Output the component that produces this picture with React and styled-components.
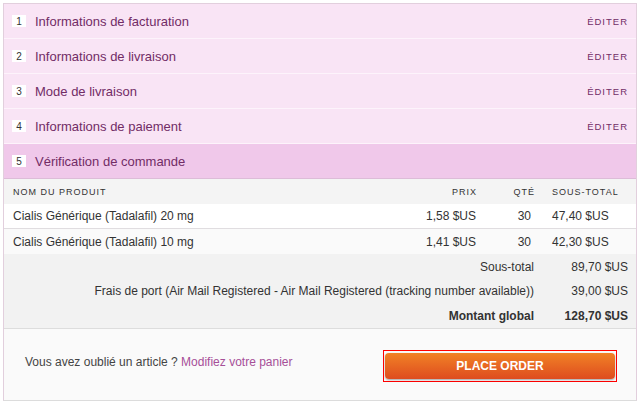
import React from 'react';
import styled, { createGlobalStyle } from 'styled-components';

const GlobalStyle = createGlobalStyle`
  body {
    margin: 0;
    background: #ffffff;
    font-family: "Liberation Sans", Arial, sans-serif;
  }
`;

const Page = styled.div`
  padding: 3px 2px 0 3px;
`;

const Panel = styled.div`
  border: 1px solid #e2cfdd;
  border-bottom-color: #dcdcdc;
  width: 632px;
`;

const Step = styled.div`
  display: flex;
  align-items: center;
  height: 34px;
  padding: 0 8px 0 8px;
  background: ${p => (p.$active ? '#f0c8ea' : '#f9e4f5')};
  border-bottom: 1px solid ${p => (p.$active ? '#ddbcd8' : '#fdf3fb')};
`;

const StepNum = styled.span`
  display: inline-flex;
  align-items: center;
  justify-content: center;
  width: 14px;
  height: 12px;
  background: #ffffff;
  color: #333333;
  font-size: 10px;
  margin-right: 9px;
`;

const StepTitle = styled.span`
  flex: 1;
  font-size: 13px;
  color: #722c66;
`;

const EditLink = styled.span`
  font-size: 9.5px;
  letter-spacing: 1px;
  color: #722c66;
`;

const Row = styled.div`
  display: grid;
  grid-template-columns: 1fr 80px 58px 76px;
  align-items: center;
  height: ${p => p.$h || 25}px;
  padding: 0 8px 0 9px;
  background: ${p => p.$bg};
  border-bottom: ${p => (p.$line ? '1px solid #e0dde0' : 'none')};
  font-size: 12px;
  color: #333333;
`;

const HeadCell = styled.span`
  font-size: 9px;
  letter-spacing: 1px;
  color: #333333;
  text-align: ${p => p.$align || 'left'};
  padding-right: ${p => p.$pr || 0}px;
`;

const Cell = styled.span`
  text-align: ${p => p.$align || 'left'};
  padding-right: ${p => p.$pr || 0}px;
`;

const Totals = styled.div`
  background: #f2f2f2;
  border-bottom: 1px solid #dddddd;
  padding: 0 8px 0 9px;
`;

const TotalLine = styled.div`
  display: grid;
  grid-template-columns: 1fr 94px;
  align-items: center;
  height: ${p => p.$h}px;
  font-size: 12px;
  color: #333333;
  font-weight: ${p => (p.$bold ? 'bold' : 'normal')};
`;

const TotalLabel = styled.span`
  text-align: right;
`;

const TotalValue = styled.span`
  text-align: right;
`;

const Footer = styled.div`
  display: flex;
  align-items: center;
  justify-content: space-between;
  height: 71px;
  padding: 0 19px 0 21px;
  background: #fafafa;
`;

const Forgot = styled.span`
  font-size: 12px;
  color: #444444;
  margin-top: -6px;
`;

const CartLink = styled.a`
  color: #a64f98;
  text-decoration: none;
`;

const Outline = styled.div`
  border: 1px solid #ff0000;
  padding: 2px 1px;
  margin-top: 2px;
`;

const OrderButton = styled.button`
  display: block;
  width: 230px;
  height: 26px;
  border: none;
  border-radius: 4px;
  background: linear-gradient(#f18226, #de4c1f);
  box-shadow: 0 1px 2px rgba(0, 0, 0, 0.35);
  color: #ffffff;
  font-family: "Liberation Sans", Arial, sans-serif;
  font-weight: bold;
  font-size: 12px;
  cursor: pointer;
`;

const steps = [
  'Informations de facturation',
  'Informations de livraison',
  'Mode de livraison',
  'Informations de paiement',
];

const items = [
  { name: 'Cialis Générique (Tadalafil) 20 mg', price: '1,58 $US', qty: 30, total: '47,40 $US', bg: '#ffffff' },
  { name: 'Cialis Générique (Tadalafil) 10 mg', price: '1,41 $US', qty: 30, total: '42,30 $US', bg: '#fafafa' },
];

export default function App() {
  return (
    <Page>
      <GlobalStyle />
      <Panel>
        {steps.map((s, i) => (
          <Step key={s}>
            <StepNum>{i + 1}</StepNum>
            <StepTitle>{s}</StepTitle>
            <EditLink>ÉDITER</EditLink>
          </Step>
        ))}
        <Step $active>
          <StepNum>5</StepNum>
          <StepTitle>Vérification de commande</StepTitle>
        </Step>

        <Row $bg="#f4f4f4">
          <HeadCell>NOM DU PRODUIT</HeadCell>
          <HeadCell $align="right" $pr={17}>PRIX</HeadCell>
          <HeadCell $align="right" $pr={17}>QTÉ</HeadCell>
          <HeadCell>SOUS-TOTAL</HeadCell>
        </Row>
        {items.map((it, i) => (
          <Row key={it.name} $bg={it.bg} $line={i === 0} $h={i === 0 ? 24 : 25}>
            <Cell>{it.name}</Cell>
            <Cell $align="right" $pr={18}>{it.price}</Cell>
            <Cell $align="right" $pr={21}>{it.qty}</Cell>
            <Cell>{it.total}</Cell>
          </Row>
        ))}

        <Totals>
          <TotalLine $h={25}>
            <TotalLabel>Sous-total</TotalLabel>
            <TotalValue>89,70 $US</TotalValue>
          </TotalLine>
          <TotalLine $h={24}>
            <TotalLabel>Frais de port (Air Mail Registered - Air Mail Registered (tracking number available))</TotalLabel>
            <TotalValue>39,00 $US</TotalValue>
          </TotalLine>
          <TotalLine $h={25} $bold>
            <TotalLabel>Montant global</TotalLabel>
            <TotalValue>128,70 $US</TotalValue>
          </TotalLine>
        </Totals>

        <Footer>
          <Forgot>
            Vous avez oublié un article ? <CartLink href="#">Modifiez votre panier</CartLink>
          </Forgot>
          <Outline>
            <OrderButton>PLACE ORDER</OrderButton>
          </Outline>
        </Footer>
      </Panel>
    </Page>
  );
}
